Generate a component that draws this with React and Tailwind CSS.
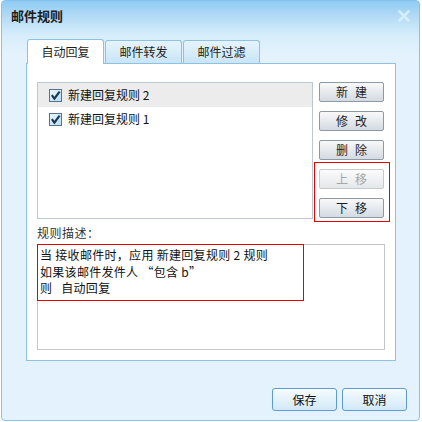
import React from 'react';

const rules = [
  { name: '新建回复规则 2', selected: true },
  { name: '新建回复规则 1', selected: false },
];

const sideButtons = [
  { label: '新建' },
  { label: '修改' },
  { label: '删除' },
];

const CheckBox = () => (
  <svg width="13" height="13" viewBox="0 0 13 13" className="shrink-0">
    <defs>
      <linearGradient id="cb" x1="0" y1="0" x2="1" y2="1">
        <stop offset="0" stopColor="#eef7fd" />
        <stop offset="1" stopColor="#b9dcf3" />
      </linearGradient>
    </defs>
    <rect x="0.5" y="0.5" width="12" height="12" fill="url(#cb)" stroke="#55738f" />
    <path d="M2.8 6.2 L5.4 9.6 L10.6 2.6" fill="none" stroke="#1b3856" strokeWidth="2.2" />
  </svg>
);

const SideButton = ({ label, disabled }) => (
  <button
    className={
      disabled
        ? 'block h-[20px] w-[65px] rounded-[2px] border border-[#c6cacd] bg-[linear-gradient(180deg,#fbfbfb,#e4e7ea)] pl-[7px] text-[12px] leading-none tracking-[7px] text-[#a6a6a6]'
        : 'block h-[20px] w-[65px] rounded-[2px] border border-[#8d9aa5] bg-[linear-gradient(180deg,#f9f9f9,#d3dae1)] pl-[7px] text-[12px] leading-none tracking-[7px] text-[#1e1e1e]'
    }
  >
    {label}
  </button>
);

const FooterButton = ({ label }) => (
  <button className="block h-[23px] w-[65px] rounded-[3px] border border-[#5d9bd0] bg-[linear-gradient(180deg,#f6fbfe,#d2e9f8)] text-[12px] leading-none text-[#111]">
    {label}
  </button>
);

const App = () => {
  return (
    <div className="w-[422px] h-[422px] bg-white font-['Noto_Sans_CJK_SC',sans-serif]">
      <div className="ml-px w-[419px] h-[421px] rounded-[4px] border border-[#88c2eb] bg-[linear-gradient(180deg,#8fcbf3_0px,#b4dbf6_16px,#d6edfb_34px,#e3f2fc_52px,#e3f2fc_100%)] flex flex-col">
        {/* Title bar */}
        <div className="h-[29px] flex items-center justify-between pl-[9px] pr-[9px]">
          <span className="text-[13px] font-bold text-[#1c1c1c] leading-none">邮件规则</span>
          <svg width="12" height="12" viewBox="0 0 12 12">
            <path d="M1.5 1.5 L10.5 10.5 M10.5 1.5 L1.5 10.5" stroke="#d6edfb" strokeWidth="2.6" strokeLinecap="round" />
          </svg>
        </div>

        {/* Tabs */}
        <div className="mt-[9px] ml-[25px] h-[24px] flex items-end gap-[1px]">
          <div className="relative z-10 -mb-px h-[25px] w-[77px] rounded-t-[3px] border border-b-0 border-[#8ec2e4] bg-white flex items-center justify-center text-[12px] text-[#1e1e1e]">
            自动回复
          </div>
          <div className="h-[23px] w-[77px] rounded-t-[3px] border border-b-0 border-[#8ec2e4] bg-[linear-gradient(180deg,#e6f4fc,#c9e5f7)] flex items-center justify-center text-[12px] text-[#1e1e1e]">
            邮件转发
          </div>
          <div className="h-[23px] w-[77px] rounded-t-[3px] border border-b-0 border-[#8ec2e4] bg-[linear-gradient(180deg,#e6f4fc,#c9e5f7)] flex items-center justify-center text-[12px] text-[#1e1e1e]">
            邮件过滤
          </div>
        </div>

        {/* Panel */}
        <div className="ml-[24px] w-[370px] h-[298px] border border-[#8ec2e4] bg-white pl-[10px] pt-[18px]">
          <div className="flex items-start">
            <div className="w-[276px] h-[137px] border border-[#bcc8d1] bg-white">
              {rules.map((rule) => (
                <div
                  key={rule.name}
                  className={
                    rule.selected
                      ? 'h-[24px] flex items-center pl-[11px] bg-[#ececec] text-[12px] text-[#111]'
                      : 'h-[24px] flex items-center pl-[11px] text-[12px] text-[#111]'
                  }
                >
                  <CheckBox />
                  <span className="ml-[6px] leading-none">{rule.name}</span>
                </div>
              ))}
            </div>

            <div className="ml-[6px] flex flex-col">
              <div className="flex flex-col gap-[9px]">
                {sideButtons.map((b) => (
                  <SideButton key={b.label} label={b.label} />
                ))}
              </div>
              <div className="mt-[2px] -ml-[5px] w-[76px] border border-[#e60000] pl-[4px] pt-[6px] pb-[3px] flex flex-col gap-[9px]">
                <SideButton label="上移" disabled />
                <SideButton label="下移" />
              </div>
            </div>
          </div>

          <div className="mt-[4px] text-[12px] leading-[14px] tracking-[0.5px] text-[#333]">规则描述：</div>

          <div className="relative mt-[4px] w-[348px] h-[106px] border border-[#c4c6c8] bg-white">
            <div className="absolute -left-px -top-px w-[267px] h-[57px] border border-[#e60000] pl-[2px] pt-[2px] text-[12px] leading-[16.5px] tracking-[0.3px] text-[#111]">
              <div>当 接收邮件时，应用 新建回复规则 2 规则</div>
              <div>如果该邮件发件人 “包含 b”</div>
              <div>则&nbsp;&nbsp; 自动回复</div>
            </div>
          </div>
        </div>

        {/* Footer */}
        <div className="mt-[27px] pr-[12px] flex justify-end gap-[5px]">
          <FooterButton label="保存" />
          <FooterButton label="取消" />
        </div>
      </div>
    </div>
  );
};

export default App;
